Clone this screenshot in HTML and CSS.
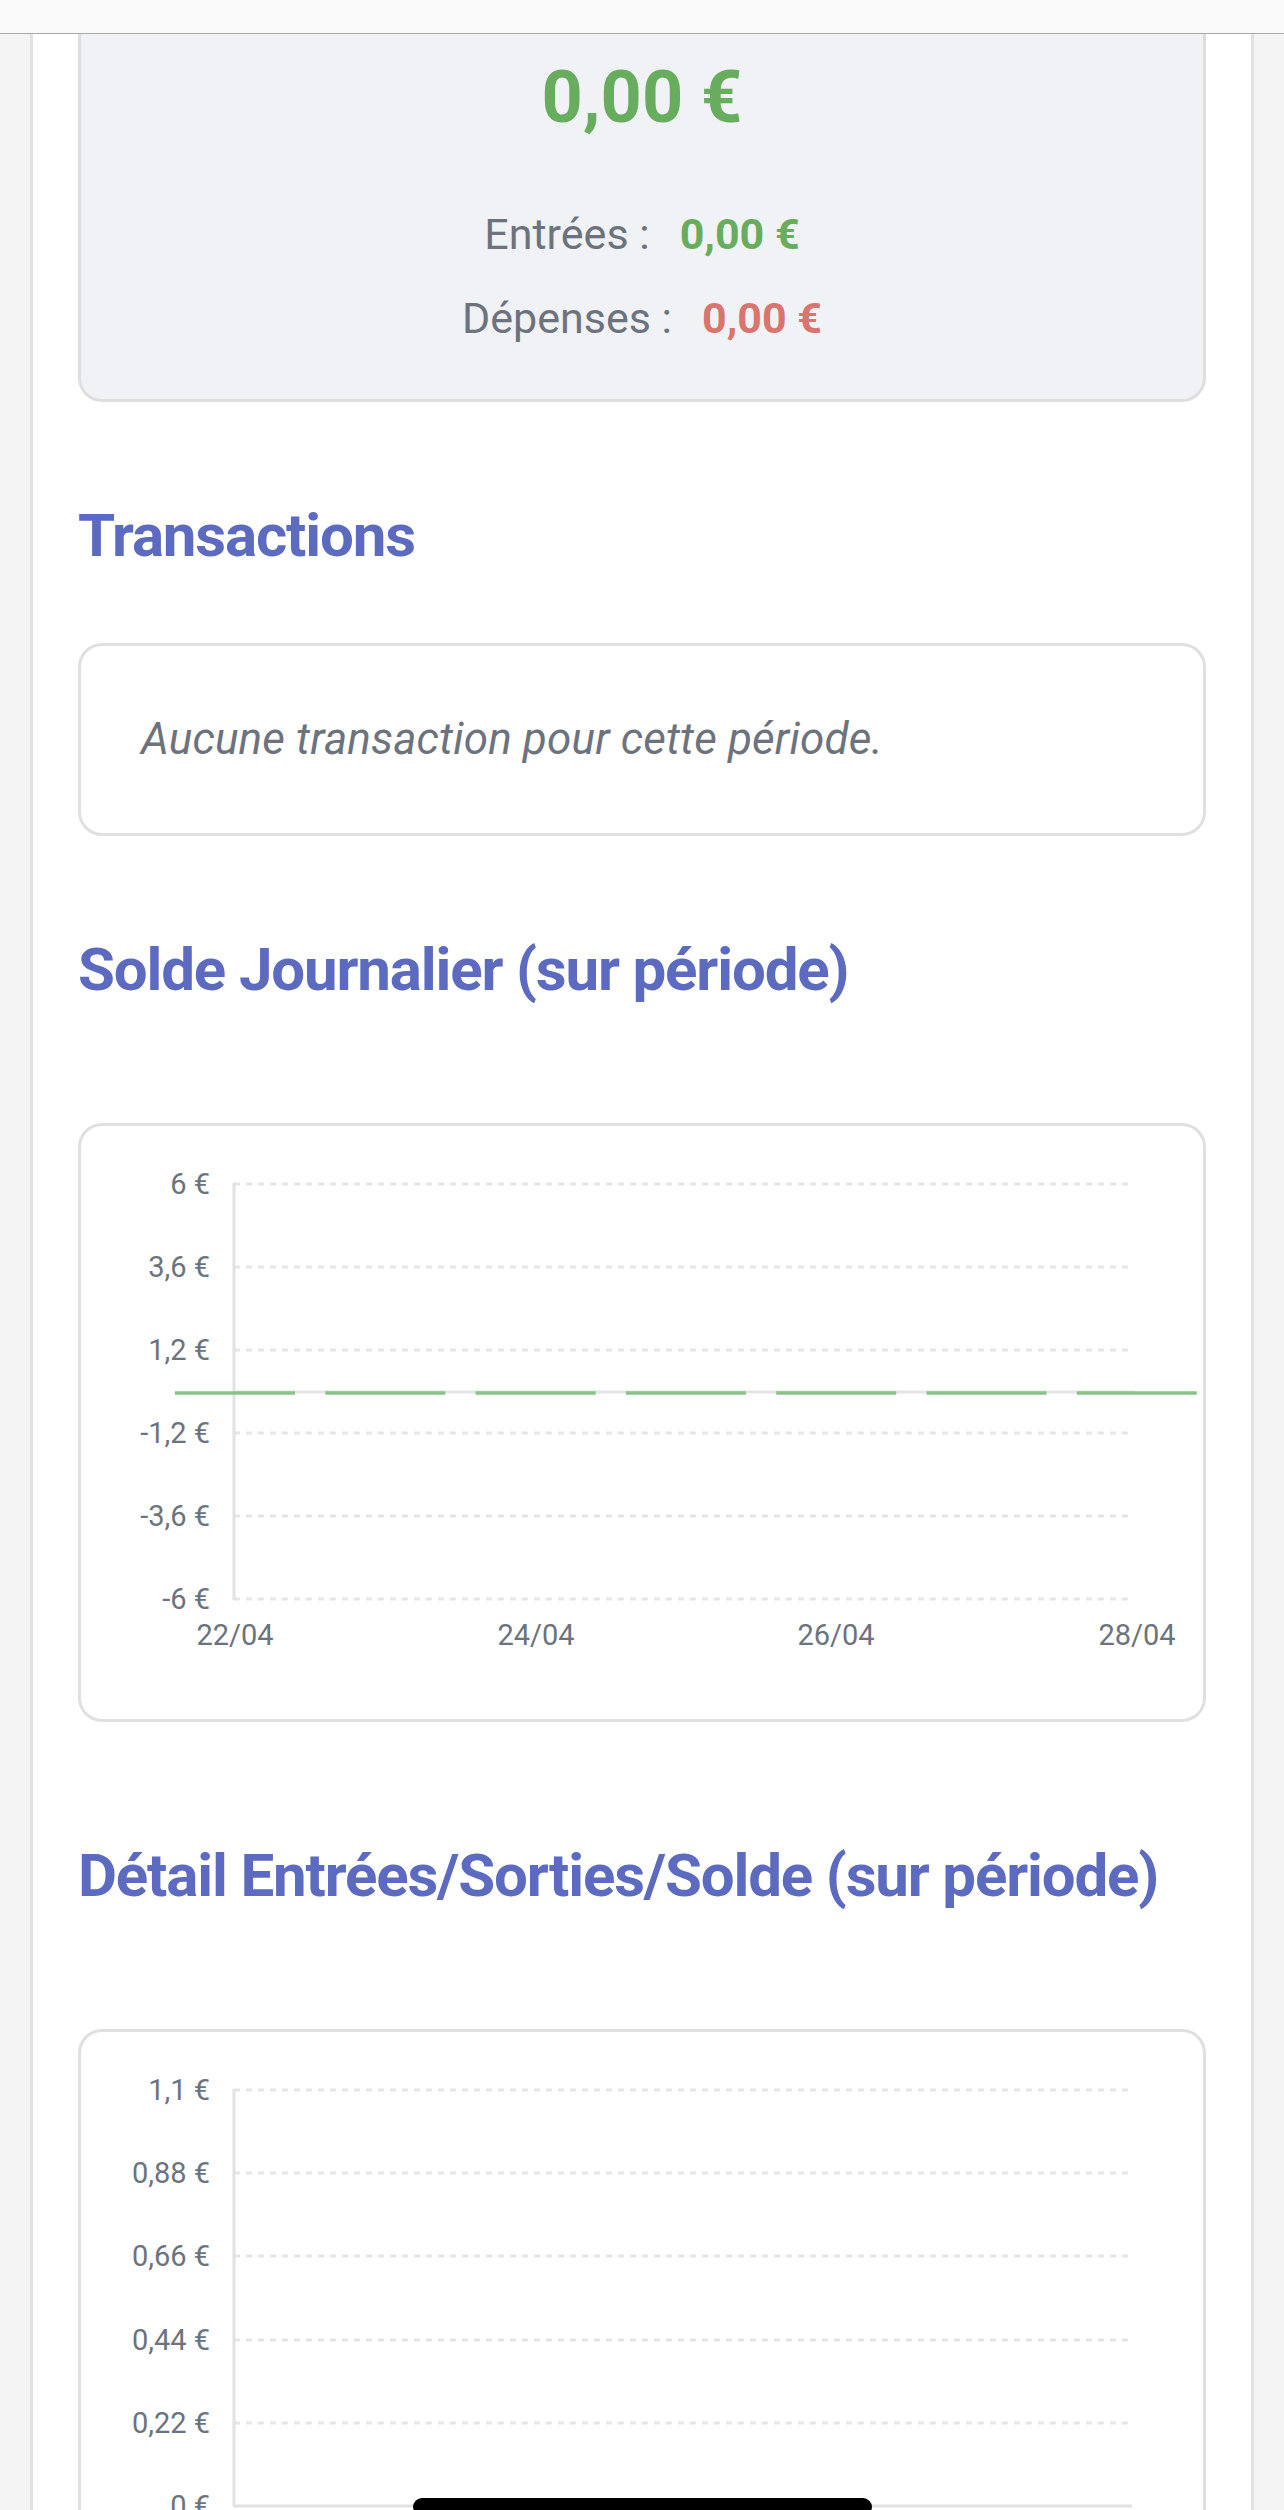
FILE: index.html
```html
<!DOCTYPE html>
<html lang="fr">
<head>
<meta charset="utf-8">
<title>Solde</title>
<link rel="stylesheet" href="styles.css">
</head>
<body>
<div class="topbar"></div>
<main class="page">
  <section class="summary">
    <div class="summary-total">0,00 €</div>
    <div class="summary-row"><span class="summary-label">Entrées :</span><span class="amount positive">0,00 €</span></div>
    <div class="summary-row second"><span class="summary-label">Dépenses :</span><span class="amount negative">0,00 €</span></div>
  </section>

  <h2 class="section-title first">Transactions</h2>
  <div class="empty-box">Aucune transaction pour cette période.</div>

  <h2 class="section-title">Solde Journalier (sur période)</h2>
  <div class="chart-box">
    <svg class="chart" width="1122" height="593" viewBox="0 0 1122 593">
      <g class="grid">
        <line x1="153" y1="58" x2="1051" y2="58"/>
        <line x1="153" y1="141" x2="1051" y2="141"/>
        <line x1="153" y1="224" x2="1051" y2="224"/>
        <line x1="153" y1="307" x2="1051" y2="307"/>
        <line x1="153" y1="390" x2="1051" y2="390"/>
        <line x1="153" y1="473" x2="1051" y2="473"/>
      </g>
      <line class="axis" x1="153" y1="57" x2="153" y2="474"/>
      <line class="zero-line" x1="153" y1="266" x2="1054" y2="266"/>
      <line class="solde-line" x1="94" y1="267" x2="1118" y2="267"/>
      <g class="ticks-y">
        <text x="129" y="68">6 €</text>
        <text x="129" y="151">3,6 €</text>
        <text x="129" y="234">1,2 €</text>
        <text x="129" y="317">-1,2 €</text>
        <text x="129" y="400">-3,6 €</text>
        <text x="129" y="483">-6 €</text>
      </g>
      <g class="ticks-x">
        <text x="154" y="519">22/04</text>
        <text x="455" y="519">24/04</text>
        <text x="755" y="519">26/04</text>
        <text x="1056" y="519">28/04</text>
      </g>
    </svg>
  </div>

  <h2 class="section-title wide">Détail Entrées/Sorties/Solde (sur période)</h2>
  <div class="chart-box">
    <svg class="chart" width="1122" height="593" viewBox="0 0 1122 593">
      <g class="grid">
        <line x1="153" y1="58" x2="1051" y2="58"/>
        <line x1="153" y1="141" x2="1051" y2="141"/>
        <line x1="153" y1="224" x2="1051" y2="224"/>
        <line x1="153" y1="308" x2="1051" y2="308"/>
        <line x1="153" y1="391" x2="1051" y2="391"/>
      </g>
      <line class="axis" x1="153" y1="57" x2="153" y2="474"/>
      <line class="axis" x1="152" y1="474" x2="1051" y2="474"/>
      <g class="ticks-y">
        <text x="129" y="68">1,1 €</text>
        <text x="129" y="151">0,88 €</text>
        <text x="129" y="234">0,66 €</text>
        <text x="129" y="318">0,44 €</text>
        <text x="129" y="401">0,22 €</text>
        <text x="129" y="484">0 €</text>
      </g>
      <g class="ticks-x">
        <text x="154" y="519">22/04</text>
        <text x="455" y="519">24/04</text>
        <text x="755" y="519">26/04</text>
        <text x="1056" y="519">28/04</text>
      </g>
    </svg>
  </div>
</main>
<div class="home-indicator"></div>
</body>
</html>
```
FILE: styles.css
```css
html, body {
  margin: 0;
  padding: 0;
  height: 100%;
  overflow: hidden;
}

body {
  background: #f4f4f4;
  font-family: Roboto, "Noto Sans", "Liberation Sans", sans-serif;
  color: #6c737d;
}

.topbar {
  height: 33px;
  background: #f9f9f9;
  border-bottom: 1px solid #a9a9a9;
}

.page {
  margin: 0 30px;
  background: #ffffff;
  border-left: 3px solid #e2e2e2;
  border-right: 3px solid #e2e2e2;
  padding: 0 45px;
  min-height: 2600px;
}

.summary {
  background: #f0f2f5;
  border: 3px solid #dedede;
  border-top: none;
  border-radius: 0 0 24px 24px;
  padding: 22px 0 49px;
  text-align: center;
}

.summary-total {
  font-size: 72px;
  line-height: 84px;
  font-weight: 700;
  color: #67ad5d;
}

.summary-row {
  margin-top: 62px;
  font-size: 43px;
  line-height: 64px;
  display: flex;
  justify-content: center;
  gap: 30px;
}

.summary-row.second {
  margin-top: 20px;
}

.summary-label {
  color: #6c737d;
}

.amount {
  font-weight: 700;
}

.amount.positive {
  color: #67ad5d;
}

.amount.negative {
  color: #d9746f;
}

.section-title {
  margin: 98px 0 0;
  font-size: 60px;
  line-height: 72px;
  font-weight: 700;
  letter-spacing: -1.15px;
  color: #5c6bc0;
  white-space: nowrap;
}

.empty-box {
  margin-top: 71px;
  border: 3px solid #e0e0e0;
  border-radius: 24px;
  padding: 60px 60px 61px;
  font-size: 44px;
  line-height: 66px;
  letter-spacing: 0.15px;
  font-style: italic;
  color: #6c737d;
}

.chart-box {
  margin-top: 117px;
  border: 3px solid #e0e0e0;
  border-radius: 24px;
  height: 593px;
  background: #ffffff;
}

.section-title.wide {
  margin-top: 118px;
}

.chart {
  display: block;
}

.chart .grid line {
  stroke: #e6e6e6;
  stroke-width: 3;
  stroke-dasharray: 6 6;
}

.chart .axis {
  stroke: #e2e2e2;
  stroke-width: 3;
}

.chart .zero-line {
  stroke: #e4e4e4;
  stroke-width: 3;
}

.chart .solde-line {
  stroke: #8bc18a;
  stroke-width: 3.5;
  stroke-dasharray: 120 30.3;
}

.chart text {
  font-family: Roboto, "Noto Sans", "Liberation Sans", sans-serif;
  font-size: 29px;
  fill: #6c737d;
}

.chart .ticks-y text {
  text-anchor: end;
}

.chart .ticks-x text {
  text-anchor: middle;
}

.home-indicator {
  position: fixed;
  left: 413px;
  bottom: -6px;
  width: 459px;
  height: 18px;
  border-radius: 9px;
  background: #000000;
}
```
